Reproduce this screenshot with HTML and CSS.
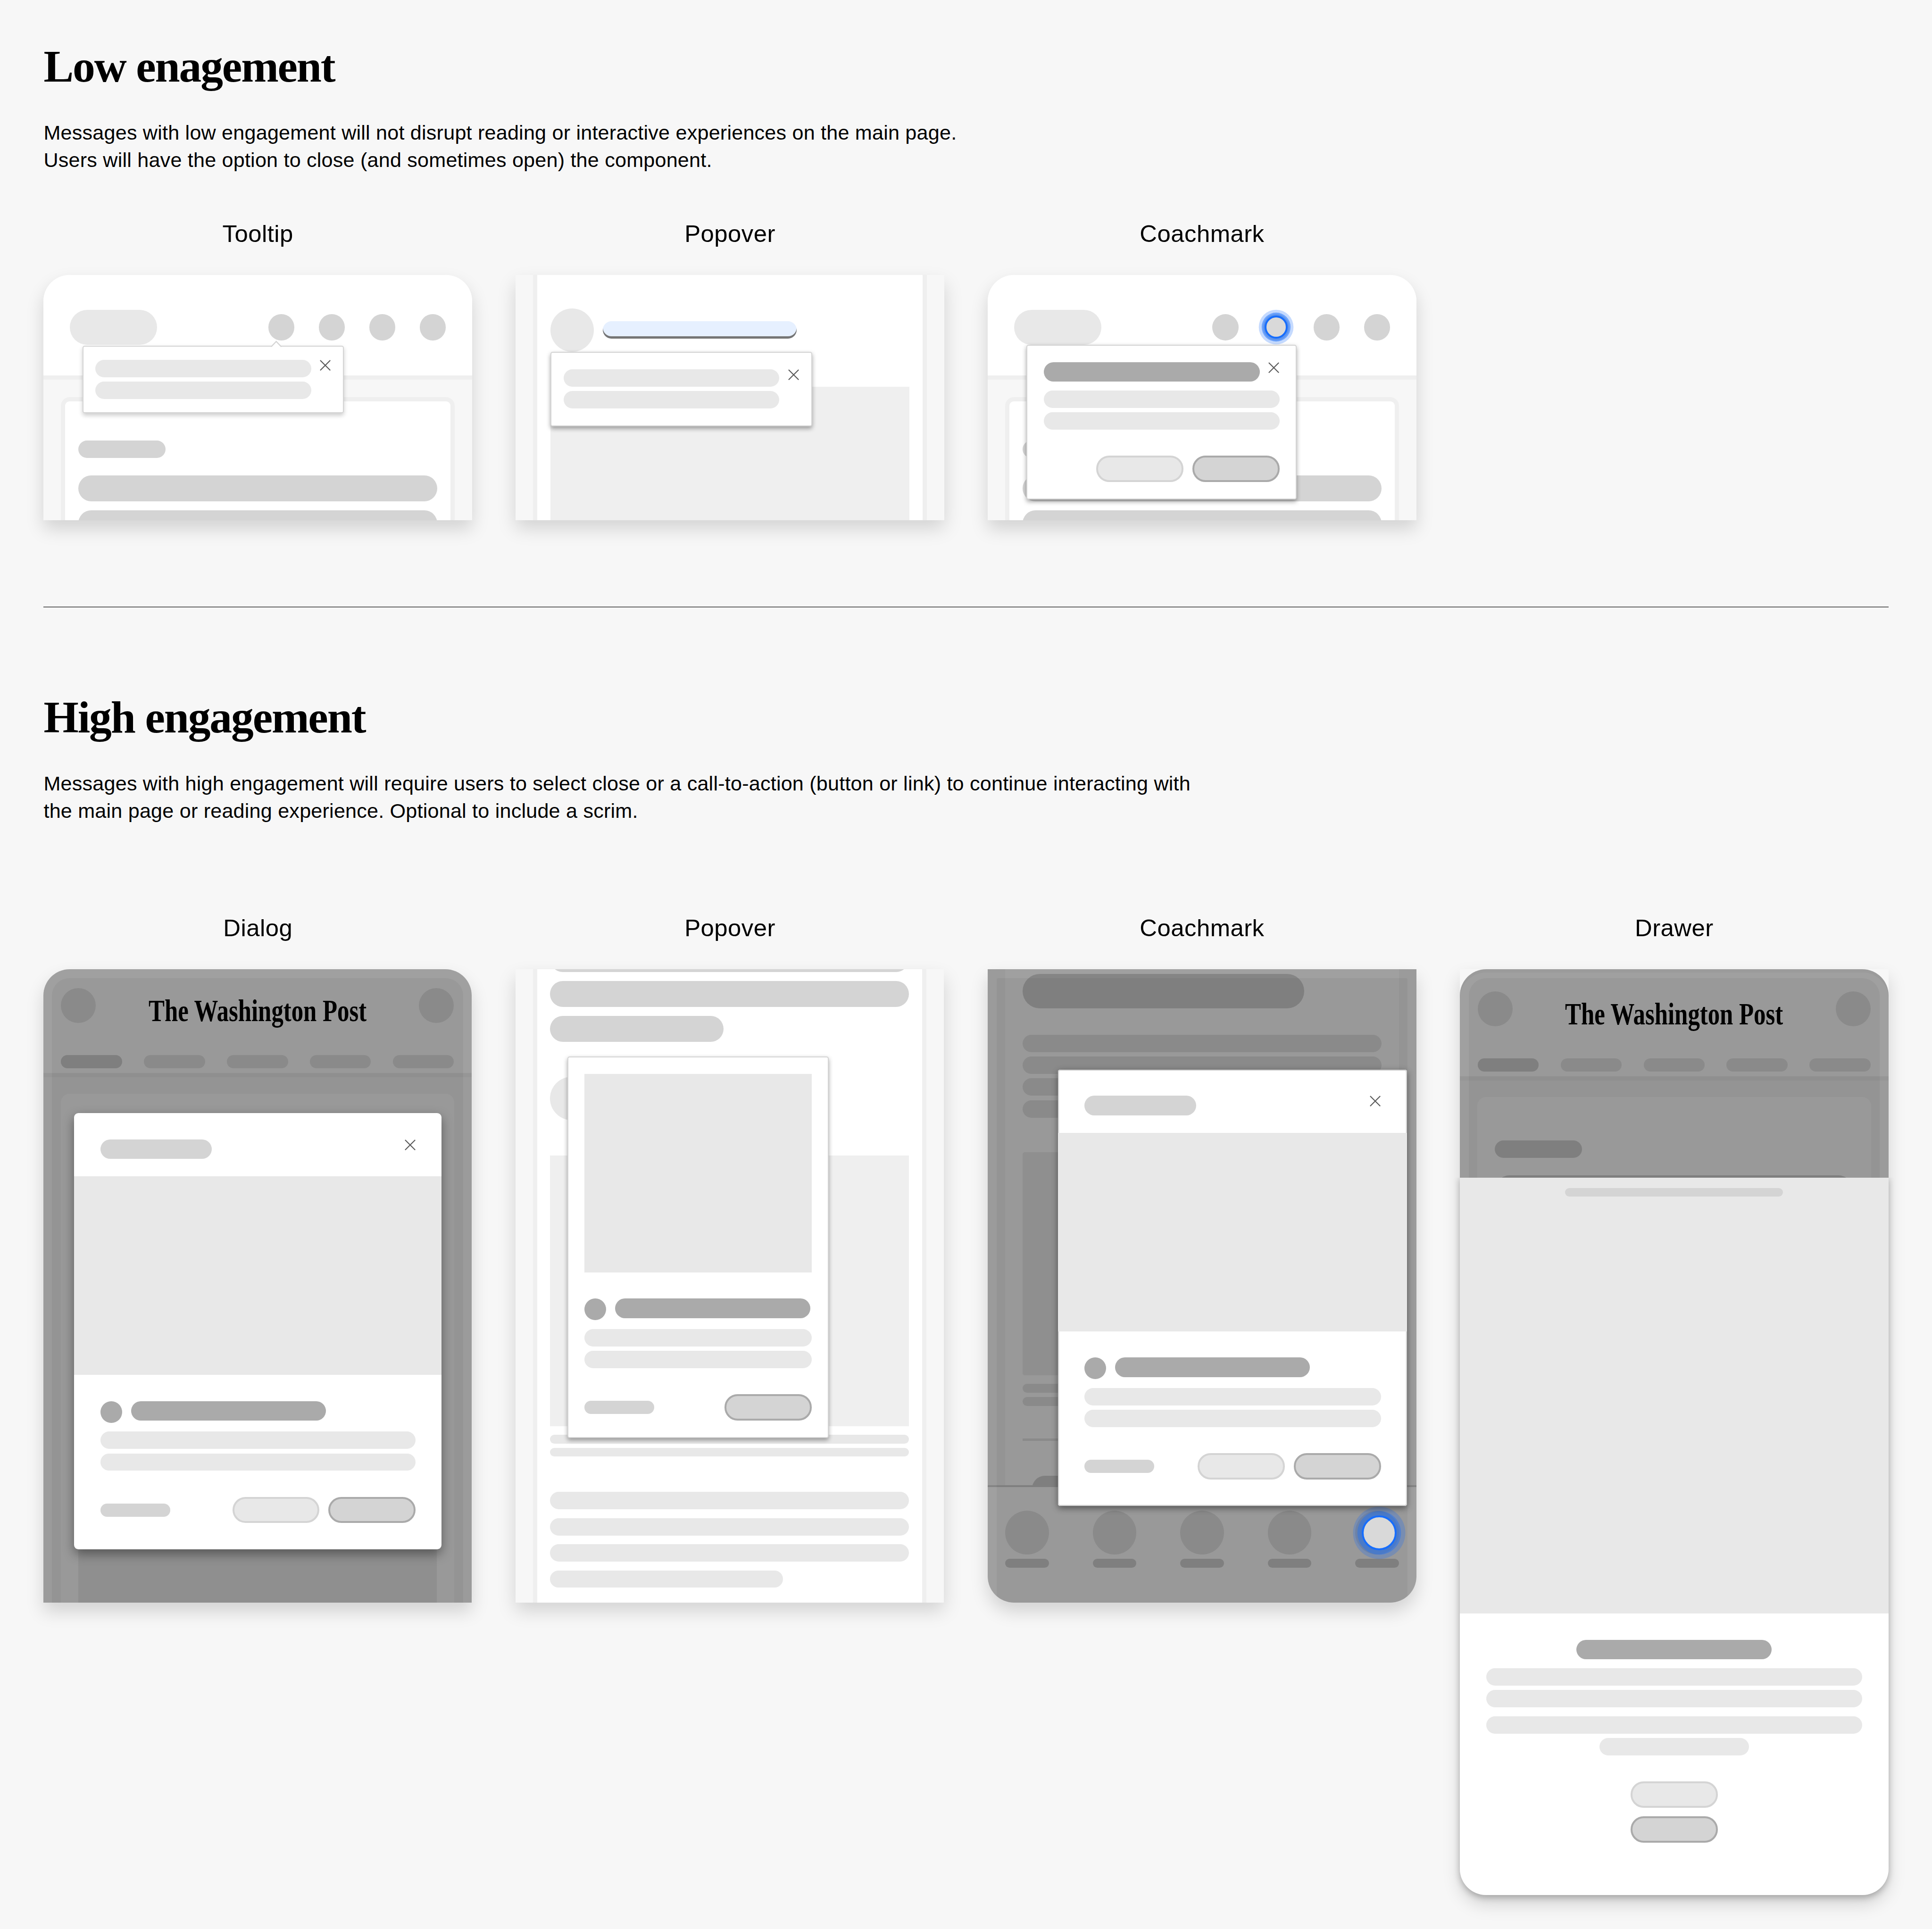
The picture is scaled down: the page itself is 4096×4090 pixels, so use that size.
FILE: index.html
```html
<!DOCTYPE html>
<html lang="en">
<head>
<meta charset="utf-8">
<title>Engagement levels</title>
<link rel="stylesheet" href="styles.css">
</head>
<body>
<svg class="defs" aria-hidden="true">
  <symbol id="close" viewBox="0 0 7.5 7.5">
    <path d="M.3 .3 7.2 7.2M7.2 .3 .3 7.2" fill="none" stroke="#5a5a5a" stroke-width=".72"/>
  </symbol>
</svg>
<main class="page">
  <section class="group">
    <h1 class="title">Low enagement</h1>
    <p class="intro">Messages with low engagement will not disrupt reading or interactive experiences on the main page.<br>Users will have the option to close (and sometimes open) the component.</p>
    <div class="examples">
      <figure class="example">
        <figcaption class="label">Tooltip</figcaption>
        <div class="mock short round-top">
          <div class="screen">
            <div class="topbar">
              <i class="shape light brand"></i>
              <div class="dots"><i class="shape mid dot"></i><i class="shape mid dot"></i><i class="shape mid dot"></i><i class="shape mid dot"></i></div>
            </div>
            <div class="panel outlined">
              <i class="shape mid bar w60"></i>
              <i class="shape mid bar tall first"></i>
              <i class="shape mid bar tall next"></i>
            </div>
          </div>
          <div class="popup tooltip">
            <svg class="caret" viewBox="0 0 8 4.5"><path d="M.6 4.5 4.1 .6 7.6 4.5Z" fill="#fff"/><path d="M.3 4 .9 4 4.1 .6 7.3 4 7.9 4" fill="none" stroke="#d4d4d4" stroke-width=".75"/></svg>
            <div class="lines"><i class="shape light bar"></i><i class="shape light bar"></i></div>
            <svg class="close"><use href="#close"/></svg>
          </div>
        </div>
      </figure>
      <figure class="example">
        <figcaption class="label">Popover</figcaption>
        <div class="mock short">
          <div class="screen">
            <div class="column byline">
              <div class="author"><i class="shape light avatar"></i><i class="shape bar link-bar"></i></div>
              <i class="picture"></i>
            </div>
          </div>
          <div class="popup mini-popover">
            <div class="lines"><i class="shape light bar"></i><i class="shape light bar"></i></div>
            <svg class="close"><use href="#close"/></svg>
          </div>
        </div>
      </figure>
      <figure class="example">
        <figcaption class="label">Coachmark</figcaption>
        <div class="mock short round-top">
          <div class="screen">
            <div class="topbar">
              <i class="shape light brand"></i>
              <div class="dots"><i class="shape mid dot"></i><i class="shape mid dot"></i><i class="shape mid dot"></i><i class="shape mid dot"></i></div>
            </div>
            <div class="panel outlined">
              <i class="shape mid bar w60"></i>
              <i class="shape mid bar tall first"></i>
              <i class="shape mid bar tall next"></i>
            </div>
          </div>
          <i class="halo halo-small"></i>
          <div class="popup mini-coach">
            <div class="head"><i class="shape dark bar strong"></i><svg class="close"><use href="#close"/></svg></div>
            <div class="lines"><i class="shape light bar"></i><i class="shape light bar"></i></div>
            <div class="actions"><i class="button"></i><i class="button primary"></i></div>
          </div>
        </div>
      </figure>
    </div>
  </section>
  <hr class="rule">
  <section class="group high">
    <h1 class="title">High engagement</h1>
    <p class="intro">Messages with high engagement will require users to select close or a call-to-action (button or link) to continue interacting with<br>the main page or reading experience. Optional to include a scrim.</p>
    <div class="examples">
      <figure class="example">
        <figcaption class="label">Dialog</figcaption>
        <div class="mock medium round-top">
          <div class="screen">
            <div class="site-head">
              <div class="site-row"><i class="shape light user"></i><span class="masthead">The Washington Post</span><i class="shape light user"></i></div>
              <div class="tabs"><i class="shape mid tab"></i><i class="shape light tab"></i><i class="shape light tab"></i><i class="shape light tab"></i><i class="shape light tab"></i></div>
            </div>
            <div class="panel plain"><i class="picture lower"></i></div>
            <div class="scrim"></div>
          </div>
          <div class="sheet dialog">
            <div class="sheet-head"><i class="shape mid bar strong w77"></i><svg class="close"><use href="#close"/></svg></div>
            <i class="media"></i>
            <div class="sheet-body">
              <div class="heading"><i class="shape dark point"></i><i class="shape dark bar strong w134"></i></div>
              <div class="lines"><i class="shape light bar"></i><i class="shape light bar"></i></div>
              <div class="actions"><i class="shape mid bar w48"></i><i class="button"></i><i class="button primary"></i></div>
            </div>
          </div>
        </div>
      </figure>
      <figure class="example">
        <figcaption class="label">Popover</figcaption>
        <div class="mock medium">
          <div class="screen">
            <div class="column article">
              <i class="shape mid bar tall"></i>
              <i class="shape mid bar tall next"></i>
              <i class="shape mid bar tall next w119"></i>
              <i class="shape light avatar"></i>
              <i class="picture"></i>
              <div class="caption"><i class="shape light bar thin"></i><i class="shape light bar thin"></i></div>
              <div class="text"><i class="shape light bar"></i><i class="shape light bar"></i><i class="shape light bar"></i><i class="shape light bar w160"></i></div>
            </div>
          </div>
          <div class="popup popover">
            <i class="media"></i>
            <div class="heading"><i class="shape dark point"></i><i class="shape dark bar strong w134"></i></div>
            <div class="lines"><i class="shape light bar"></i><i class="shape light bar"></i></div>
            <div class="actions"><i class="shape mid bar w48"></i><i class="button primary"></i></div>
          </div>
        </div>
      </figure>
      <figure class="example">
        <figcaption class="label">Coachmark</figcaption>
        <div class="mock medium round-bottom">
          <div class="screen">
            <div class="reader">
              <i class="shape mid bar w193"></i>
              <div class="text"><i class="shape light bar"></i><i class="shape light bar"></i><i class="shape light bar"></i><i class="shape light bar"></i></div>
              <i class="picture"></i>
              <div class="caption"><i class="shape light bar thin"></i><i class="shape light bar thin"></i></div>
              <i class="light hairline"></i>
              <i class="shape mid bar tall cut"></i>
            </div>
            <div class="navbar">
              <div class="nav-item"><i class="shape light avatar"></i><i class="shape mid bar thin"></i></div>
              <div class="nav-item"><i class="shape light avatar"></i><i class="shape mid bar thin"></i></div>
              <div class="nav-item"><i class="shape light avatar"></i><i class="shape mid bar thin"></i></div>
              <div class="nav-item"><i class="shape light avatar"></i><i class="shape mid bar thin"></i></div>
              <div class="nav-item"><i class="shape light avatar"></i><i class="shape mid bar thin"></i></div>
            </div>
            <div class="scrim square"></div>
          </div>
          <i class="halo halo-large"></i>
          <div class="sheet coach">
            <div class="sheet-head"><i class="shape mid bar strong w77"></i><svg class="close"><use href="#close"/></svg></div>
            <i class="media"></i>
            <div class="sheet-body">
              <div class="heading"><i class="shape dark point"></i><i class="shape dark bar strong w134"></i></div>
              <div class="lines"><i class="shape light bar"></i><i class="shape light bar"></i></div>
              <div class="actions"><i class="shape mid bar w48"></i><i class="button"></i><i class="button primary"></i></div>
            </div>
          </div>
        </div>
      </figure>
      <figure class="example">
        <figcaption class="label">Drawer</figcaption>
        <div class="mock long round-bottom">
          <div class="screen peek">
            <div class="site-head">
              <div class="site-row"><i class="shape light user"></i><span class="masthead">The Washington Post</span><i class="shape light user"></i></div>
              <div class="tabs"><i class="shape mid tab"></i><i class="shape light tab"></i><i class="shape light tab"></i><i class="shape light tab"></i><i class="shape light tab"></i></div>
            </div>
            <div class="panel plain teaser"><i class="shape mid bar w60"></i><i class="shape mid bar tall first"></i></div>
            <div class="scrim"></div>
          </div>
          <div class="drawer">
            <div class="drawer-media"><i class="shape mid bar thin w150"></i></div>
            <div class="drawer-body">
              <i class="shape dark bar strong w134"></i>
              <div class="lines"><i class="shape light bar"></i><i class="shape light bar"></i></div>
              <div class="lines"><i class="shape light bar"></i><i class="shape light bar w103"></i></div>
              <div class="stack"><i class="button"></i><i class="button primary"></i></div>
            </div>
          </div>
        </div>
      </figure>
    </div>
  </section>
</main>
</body>
</html>
```
FILE: styles.css
```css
/* The board is 1329 units wide; 1rem is ten units. */
html { font-size: calc(100vw / 132.9); }
*, *::before, *::after { box-sizing: border-box; }
body {
  margin: 0;
  background: #f7f7f7;
  color: #000;
  font-family: "Liberation Sans", Arial, sans-serif;
  overflow: hidden;
}
.defs { display: none; }
i { display: block; flex: none; }
.page { padding: 2.71rem 3rem 0; height: 132.7rem; display: flex; flex-direction: column; }

/* Text */
.title {
  margin: 0;
  font: 700 3.1rem/3.75rem "Liberation Serif", "Times New Roman", serif;
  letter-spacing: -.069rem;
}
.intro { margin: 1.74rem 0 0; font-size: 1.4rem; line-height: 1.875rem; letter-spacing: .0068rem; white-space: nowrap; }
.label { font-size: 1.65rem; line-height: 2.25rem; letter-spacing: .015rem; text-align: center; }

/* Rows of examples */
.examples { display: flex; gap: 3rem; margin-top: 3rem; }
.high .examples { margin-top: 6rem; }
.example { margin: 0; width: 29.475rem; display: flex; flex-direction: column; gap: 1.71rem; }
.high .example:nth-child(-n+2) .mock { margin: 0 .025rem 0 -.025rem; }
.rule { width: 100%; height: .075rem; margin: 5.93rem 0 5.7rem; border: 0; background: #666; flex: none; }

/* Mock frames */
.mock { position: relative; background: #f7f7f7; box-shadow: 0 .6rem 1.2rem rgba(0, 0, 0, .15); }
.short { height: 16.875rem; }
.medium { height: 43.575rem; }
.long { height: 63.675rem; display: flex; flex-direction: column; }
.round-top { border-radius: 1.8rem 1.8rem 0 0; }
.round-bottom { border-radius: 0 0 1.8rem 1.8rem; }
.screen { position: relative; height: 100%; overflow: hidden; border-radius: inherit; display: flex; flex-direction: column; }

/* Placeholder shapes */
.shape { border-radius: 10rem; }
.light { background: #e8e8e8; }
.mid { background: #d4d4d4; }
.dark { background: #aaa; }
.bar { height: 1.2rem; width: 100%; }
.bar.tall { height: 1.8rem; }
.bar.strong { height: 1.35rem; }
.bar.thin { height: .6rem; }
.bar.first { margin-top: 1.2rem; }
.bar.next { margin-top: .6rem; }
.bar.w48 { width: 4.8rem; height: .9rem; }
.bar.w60 { width: 6rem; }
.bar.w77 { width: 7.68rem; }
.bar.w103 { width: 10.3rem; }
.bar.w119 { width: 11.94rem; }
.bar.w134 { width: 13.43rem; }
.bar.w150 { width: 15rem; }
.bar.w160 { width: 16.01rem; }
.bar.w193 { width: 19.35rem; height: 2.4rem; }
.avatar { width: 3rem; height: 3rem; }
.point { width: 1.5rem; height: 1.5rem; }
.picture { background: #efefef; }
.media { background: #e8e8e8; height: 13.65rem; }
.button { width: 6rem; height: 1.8rem; border-radius: .9rem; background: #e8e8e8; border: .15rem solid #d4d4d4; }
.button.primary { background: #d4d4d4; border-color: #aaa; }
.close { width: .75rem; height: .75rem; flex: none; display: block; }
.lines { display: flex; flex-direction: column; gap: .3rem; align-items: center; }
.lines .bar { flex: none; }

/* App header with icon dots */
.topbar { flex: none; height: 7.2rem; padding: 2.4rem 1.8rem 2.1rem; background: #fff; border-bottom: .3rem solid #efefef; display: flex; justify-content: space-between; align-items: center; }
.brand { width: 6rem; height: 2.4rem; }
.dots { display: flex; gap: 1.675rem; }
.dot { width: 1.8rem; height: 1.8rem; }
.panel { margin: 1.2rem 1.2rem 0; background: #fff; border-radius: .6rem .6rem 0 0; flex: 1 0 auto; display: flex; flex-direction: column; }
.panel.outlined { border: .3rem solid #efefef; border-bottom: 0; padding: 2.7rem .9rem 0; }
.panel.plain { margin-top: 1.13rem; padding: 0 1.2rem; }
.picture.lower { margin-top: 25rem; flex: 1 0 auto; }
.panel.teaser { padding-top: 3rem; }
.teaser .bar.first { margin-left: .1rem; width: 24.45rem; }

/* Article column */
.column { flex: 1 0 auto; margin: 0 1.2rem; padding: 0 .9rem; background: #fff; border: solid #efefef; border-width: 0 .3rem; display: flex; flex-direction: column; }
.byline { padding-top: 2.3rem; }
.author { display: flex; gap: .6rem; padding-top: 0; }
.link-bar { width: 13.35rem; margin-top: .9rem; background: #e6f0ff; box-shadow: inset 0 -.16rem #757575; }
.byline .picture { margin-top: 2.4rem; flex: 1 0 auto; }
.article > .bar:first-child { margin-top: -1.61rem; }
.article .avatar { margin-top: 2.4rem; }
.article .picture { height: 18.6rem; margin-top: 2.43rem; }
.caption { display: flex; flex-direction: column; gap: .3rem; margin-top: .6rem; }
.text { display: flex; flex-direction: column; gap: .6rem; margin-top: 2.43rem; }

/* News site header */
.site-head { flex: none; height: 7.43rem; padding: 1.3rem 1.225rem 0; background: #fff; border-bottom: .3rem solid #efefef; display: flex; flex-direction: column; gap: 2.21rem; }
.site-row { display: flex; justify-content: space-between; align-items: center; height: 2.4rem; }
.user { width: 2.4rem; height: 2.4rem; }
.masthead { font: 700 2.1rem/2.4rem "Liberation Serif", "Times New Roman", serif; white-space: nowrap; width: 15rem; display: flex; justify-content: center; transform: translateY(.38rem) scaleX(.785); }
.tabs { display: flex; justify-content: space-between; }
.tab { width: 4.2rem; height: .9rem; }

/* Reader with bottom navigation */
.reader { height: 35.475rem; flex: none; overflow: hidden; margin: 0 1.2rem; padding: .3rem 1.2rem 0; background: #fff; display: flex; flex-direction: column; }
.reader .text { gap: .3rem; margin-top: 1.8rem; }
.reader .picture { height: 15.33rem; margin-top: 2.4rem; border-radius: .15rem; }
.hairline { height: .15rem; margin-top: 2.25rem; }
.bar.cut { margin: 2.4rem 0 0 .63rem; }
.navbar { flex: 1; background: #fff; border-top: .15rem solid #d4d4d4; padding: 1.65rem 1.2rem 0; display: flex; justify-content: space-between; }
.nav-item { width: 3rem; display: flex; flex-direction: column; gap: .3rem; }

/* Scrim: full cover with a slightly deeper inset layer */
.scrim { position: absolute; inset: 0; background: rgba(0, 0, 0, .373); }
.scrim::after { content: ""; position: absolute; inset: .6rem .6rem 0; background: rgba(0, 0, 0, .043); border-radius: 1.2rem 1.2rem 0 0; }
.scrim.square::after { border-radius: .1rem .1rem 0 0; }
.masthead { position: relative; z-index: 2; }

/* Focus rings of coachmarks */
.halo { position: absolute; border-radius: 50%; background: #d9d9d9; border: .15rem solid #166dfc; }
.halo-small { width: 1.6rem; height: 1.6rem; left: 19.03rem; top: 2.8rem; box-shadow: 0 0 0 .2rem rgba(22, 109, 252, .5), 0 0 0 .4rem rgba(22, 109, 252, .25); }
.halo-large { width: 2.4rem; height: 2.4rem; left: 25.73rem; top: 37.58rem; box-shadow: 0 0 0 .3rem rgba(22, 109, 252, .4), 0 0 0 .6rem rgba(22, 109, 252, .25); }

/* Small floating cards */
.popup { position: absolute; background: #fff; border: .075rem solid #d4d4d4; border-radius: .15rem; box-shadow: 0 .15rem .3rem rgba(0, 0, 0, .35); }
.tooltip, .mini-popover { width: 18rem; display: flex; gap: .6rem; }
.tooltip .lines, .mini-popover .lines { width: 14.85rem; }
.tooltip { left: 2.67rem; top: 4.88rem; height: 4.63rem; padding: .9rem .825rem; box-shadow: 0 .15rem .3rem rgba(0, 0, 0, .2); }
.caret { position: absolute; width: .8rem; height: .45rem; left: 12.87rem; top: -.43rem; }
.mini-popover { left: 2.4rem; top: 5.3rem; height: 5.12rem; padding: 1.125rem .825rem; }
.mini-coach { left: 2.66rem; top: 4.81rem; width: 18.6rem; height: 10.65rem; padding: 1.125rem; display: flex; flex-direction: column; }
.head { display: flex; gap: .6rem; }
.head .bar { width: 14.85rem; }
.head + .lines, .heading + .lines { margin-top: .6rem; }
.actions { display: flex; gap: .6rem; margin-top: 1.8rem; align-items: center; justify-content: flex-end; }
.actions .bar { margin-right: auto; }
.popover { left: 3.57rem; top: 6rem; width: 18rem; height: 26.25rem; padding: 1.125rem; }
.popover .heading { margin-top: 1.8rem; }
.heading { display: flex; gap: .6rem; }

/* Larger dialogs */
.sheet { position: absolute; background: #fff; box-shadow: 0 .3rem .75rem rgba(0, 0, 0, .4); }
.sheet-head { height: 4.35rem; padding: 1.8rem 1.8rem 0; display: flex; justify-content: space-between; }
.sheet-body { padding: 1.8rem; }
.dialog { left: 2.13rem; top: 9.9rem; width: 25.275rem; height: 30rem; border-radius: .3rem; }
.coach { left: 4.84rem; top: 6.9rem; width: 24rem; height: 30rem; border-radius: .15rem; box-shadow: inset 0 0 0 .075rem #d4d4d4, 0 .15rem .45rem rgba(0, 0, 0, .45); }

/* Drawer */
.peek { height: 14.325rem; flex: none; padding-top: .225rem; border-radius: 0; }
.peek .scrim { border-radius: 1.8rem 1.8rem 0 0; }
.peek .site-head { border-radius: 1.8rem 1.8rem 0 0; }
.drawer { position: relative; flex: 1; border-radius: 0 0 1.8rem 1.8rem; background: #fff; box-shadow: 0 .15rem .45rem rgba(0, 0, 0, .25); clip-path: inset(0 -2rem -3rem -2rem); }
.drawer-media { height: 30rem; padding-top: .72rem; background: #e8e8e8; display: flex; justify-content: center; }
.drawer-body { padding: 1.8rem 1.8rem 0; display: flex; flex-direction: column; align-items: center; gap: .6rem; }
.drawer-body .lines { width: 100%; }
.drawer-body .lines + .lines { margin-top: 0; }
.stack { margin-top: 1.2rem; display: flex; flex-direction: column; gap: .6rem; }
```
